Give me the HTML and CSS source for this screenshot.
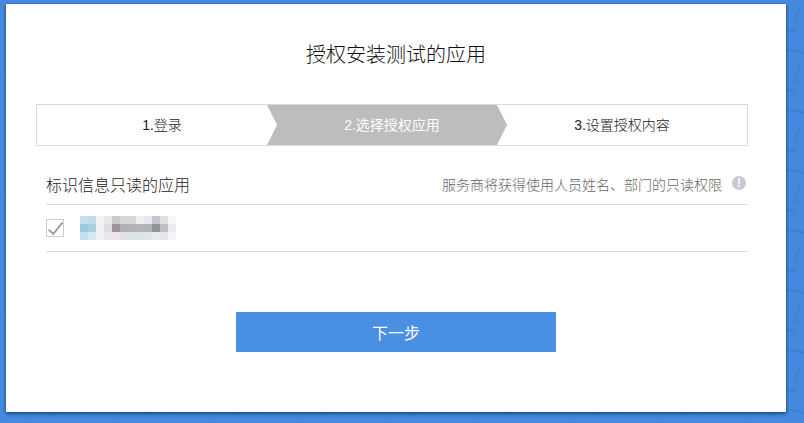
FILE: index.html
```html
<!DOCTYPE html>
<html lang="zh-CN">
<head>
<meta charset="utf-8">
<title>授权安装测试的应用</title>
<link rel="stylesheet" href="styles.css">
</head>
<body>
<main class="panel">
  <h1 class="title">授权安装测试的应用</h1>
  <ol class="steps">
    <li class="step step-first">1.登录</li>
    <li class="step step-active">2.选择授权应用
      <svg class="arrow arrow-start" width="11" height="40" viewBox="0 0 11 40" aria-hidden="true"><path d="M0 0L10 20L0 40Z" fill="#fff"/></svg>
      <svg class="arrow arrow-end" width="11" height="40" viewBox="0 0 11 40" aria-hidden="true"><path d="M0 0L10 20L0 40Z" fill="#bdbdbd"/></svg>
    </li>
    <li class="step step-last">3.设置授权内容</li>
  </ol>
  <section class="group">
    <header class="group-head">
      <h2 class="group-title">标识信息只读的应用</h2>
      <p class="group-note">服务商将获得使用人员姓名、部门的只读权限</p>
      <span class="info">!</span>
    </header>
    <div class="app-row">
      <span class="check">
        <svg width="18" height="18" viewBox="0 0 18 18" aria-hidden="true"><path d="M2.6 10.6L7.3 15L16.4 3.6" fill="none" stroke="#999" stroke-width="1.8"/></svg>
      </span>
      <svg class="mosaic" width="96" height="24" viewBox="0 0 12 3" shape-rendering="crispEdges" aria-hidden="true">
        <rect x="0" y="0" width="1" height="1" fill="#c5dfec"/><rect x="1" y="0" width="1" height="1" fill="#c0dcea"/><rect x="2" y="0" width="1" height="1" fill="#f2f2f6"/><rect x="3" y="0" width="1" height="1" fill="#e8e8ec"/><rect x="4" y="0" width="1" height="1" fill="#ccc8cc"/><rect x="5" y="0" width="1" height="1" fill="#d8d8da"/><rect x="6" y="0" width="1" height="1" fill="#d8d8dc"/><rect x="7" y="0" width="1" height="1" fill="#eeeef0"/><rect x="8" y="0" width="1" height="1" fill="#e8e8ee"/><rect x="9" y="0" width="1" height="1" fill="#c8c4cc"/><rect x="10" y="0" width="1" height="1" fill="#e0e0e4"/><rect x="11" y="0" width="1" height="1" fill="#f6f6f8"/>
        <rect x="0" y="1" width="1" height="1" fill="#98cbe0"/><rect x="1" y="1" width="1" height="1" fill="#a8d0e2"/><rect x="2" y="1" width="1" height="1" fill="#f0f0f4"/><rect x="3" y="1" width="1" height="1" fill="#dcdce4"/><rect x="4" y="1" width="1" height="1" fill="#9c949c"/><rect x="5" y="1" width="1" height="1" fill="#b0b0b4"/><rect x="6" y="1" width="1" height="1" fill="#b0b2b4"/><rect x="7" y="1" width="1" height="1" fill="#b4b6b8"/><rect x="8" y="1" width="1" height="1" fill="#b0b2b4"/><rect x="9" y="1" width="1" height="1" fill="#949498"/><rect x="10" y="1" width="1" height="1" fill="#c0c0c4"/><rect x="11" y="1" width="1" height="1" fill="#ecedf3"/>
        <rect x="0" y="2" width="1" height="1" fill="#c4e0ee"/><rect x="1" y="2" width="1" height="1" fill="#d8e6f2"/><rect x="2" y="2" width="1" height="1" fill="#f0f0f6"/><rect x="3" y="2" width="1" height="1" fill="#e8e8f0"/><rect x="4" y="2" width="1" height="1" fill="#eee4ea"/><rect x="5" y="2" width="1" height="1" fill="#dce2e8"/><rect x="6" y="2" width="1" height="1" fill="#dce4e8"/><rect x="7" y="2" width="1" height="1" fill="#dce4e6"/><rect x="8" y="2" width="1" height="1" fill="#e0e6e8"/><rect x="9" y="2" width="1" height="1" fill="#e8ecf0"/><rect x="10" y="2" width="1" height="1" fill="#e4e4ea"/><rect x="11" y="2" width="1" height="1" fill="#f4f4f8"/>
      </svg>
    </div>
  </section>
  <button class="next" type="button">下一步</button>
</main>
</body>
</html>
```
FILE: styles.css
```css
* { box-sizing: border-box; }
html, body { height: 100%; }
body {
  margin: 0;
  padding: 4px 18px 11px 6px;
  overflow: hidden;
  font-family: "Liberation Sans", "Noto Sans CJK SC", sans-serif;
  font-weight: 300;
  background-color: #4489dd;
  background-image: url("data:image/svg+xml,%3Csvg xmlns='http://www.w3.org/2000/svg' width='90' height='60'%3E%3Cg fill='none' stroke='%233a7ccb' stroke-width='2' opacity='.7'%3E%3Cpath d='M10 56l12-20M28 58l8-22M52 56c10-6 20-8 32-3M5 12l8 16M80 6l-6 18M52 24c8 6 14 8 24 6'/%3E%3C/g%3E%3C/svg%3E");
}
.panel {
  height: 408px;
  padding: 35px 30px 0;
  background: #fff;
  box-shadow: 0 2px 3px rgba(20, 60, 110, .75), -1px 0 2px rgba(20, 60, 110, .2), 1px 0 2px rgba(20, 60, 110, .35);
  display: flex;
  flex-direction: column;
}
.title {
  margin: 0;
  height: 65px;
  font-size: 20px;
  line-height: 32px;
  font-weight: 300;
  color: #111;
  text-align: center;
}
.steps {
  display: flex;
  margin: 0;
  padding: 0;
  width: 712px;
  height: 42px;
  list-style: none;
  border: 1px solid #dcdcdc;
}
.step {
  font-size: 14px;
  line-height: 40px;
  text-align: center;
  color: #222;
}
.step-first { width: 230px; padding-left: 20px; }
.step-active {
  position: relative;
  width: 230px;
  padding-left: 20px;
  color: #fff;
  background: #bdbdbd;
  font-weight: 400;
}
.step-last { flex: 1; }
.arrow { position: absolute; top: 0; }
.arrow-start { left: 0; }
.arrow-end { left: 100%; }
.group { margin: 18px 0 0 10px; width: 701px; }
.group-head {
  display: flex;
  align-items: center;
  height: 41px;
  border-bottom: 1px solid #dcdcdc;
}
.group-title {
  margin: 0;
  font-size: 16px;
  font-weight: 300;
  color: #222;
}
.group-note {
  margin: 0 10px 0 auto;
  font-size: 14px;
  color: #666;
}
.info {
  width: 14px;
  height: 14px;
  margin: 0 1px 3px 0;
  border-radius: 50%;
  background: #c8c9d0;
  color: #fff;
  font: 700 12px/14px "Liberation Sans", sans-serif;
  text-align: center;
}
.app-row {
  display: flex;
  align-items: center;
  gap: 16px;
  height: 47px;
  border-bottom: 1px solid #dcdcdc;
}
.check {
  display: flex;
  align-items: center;
  justify-content: center;
  width: 18px;
  height: 18px;
  border: 1px solid #ccc;
}
.check svg { flex: none; }
.mosaic { display: block; filter: blur(.3px); }
.next {
  align-self: flex-start;
  width: 320px;
  height: 40px;
  margin: 60px 0 0 200px;
  border: 0;
  background: #4a90e2;
  color: #fff;
  font: 400 16px "Liberation Sans", "Noto Sans CJK SC", sans-serif;
}
```
